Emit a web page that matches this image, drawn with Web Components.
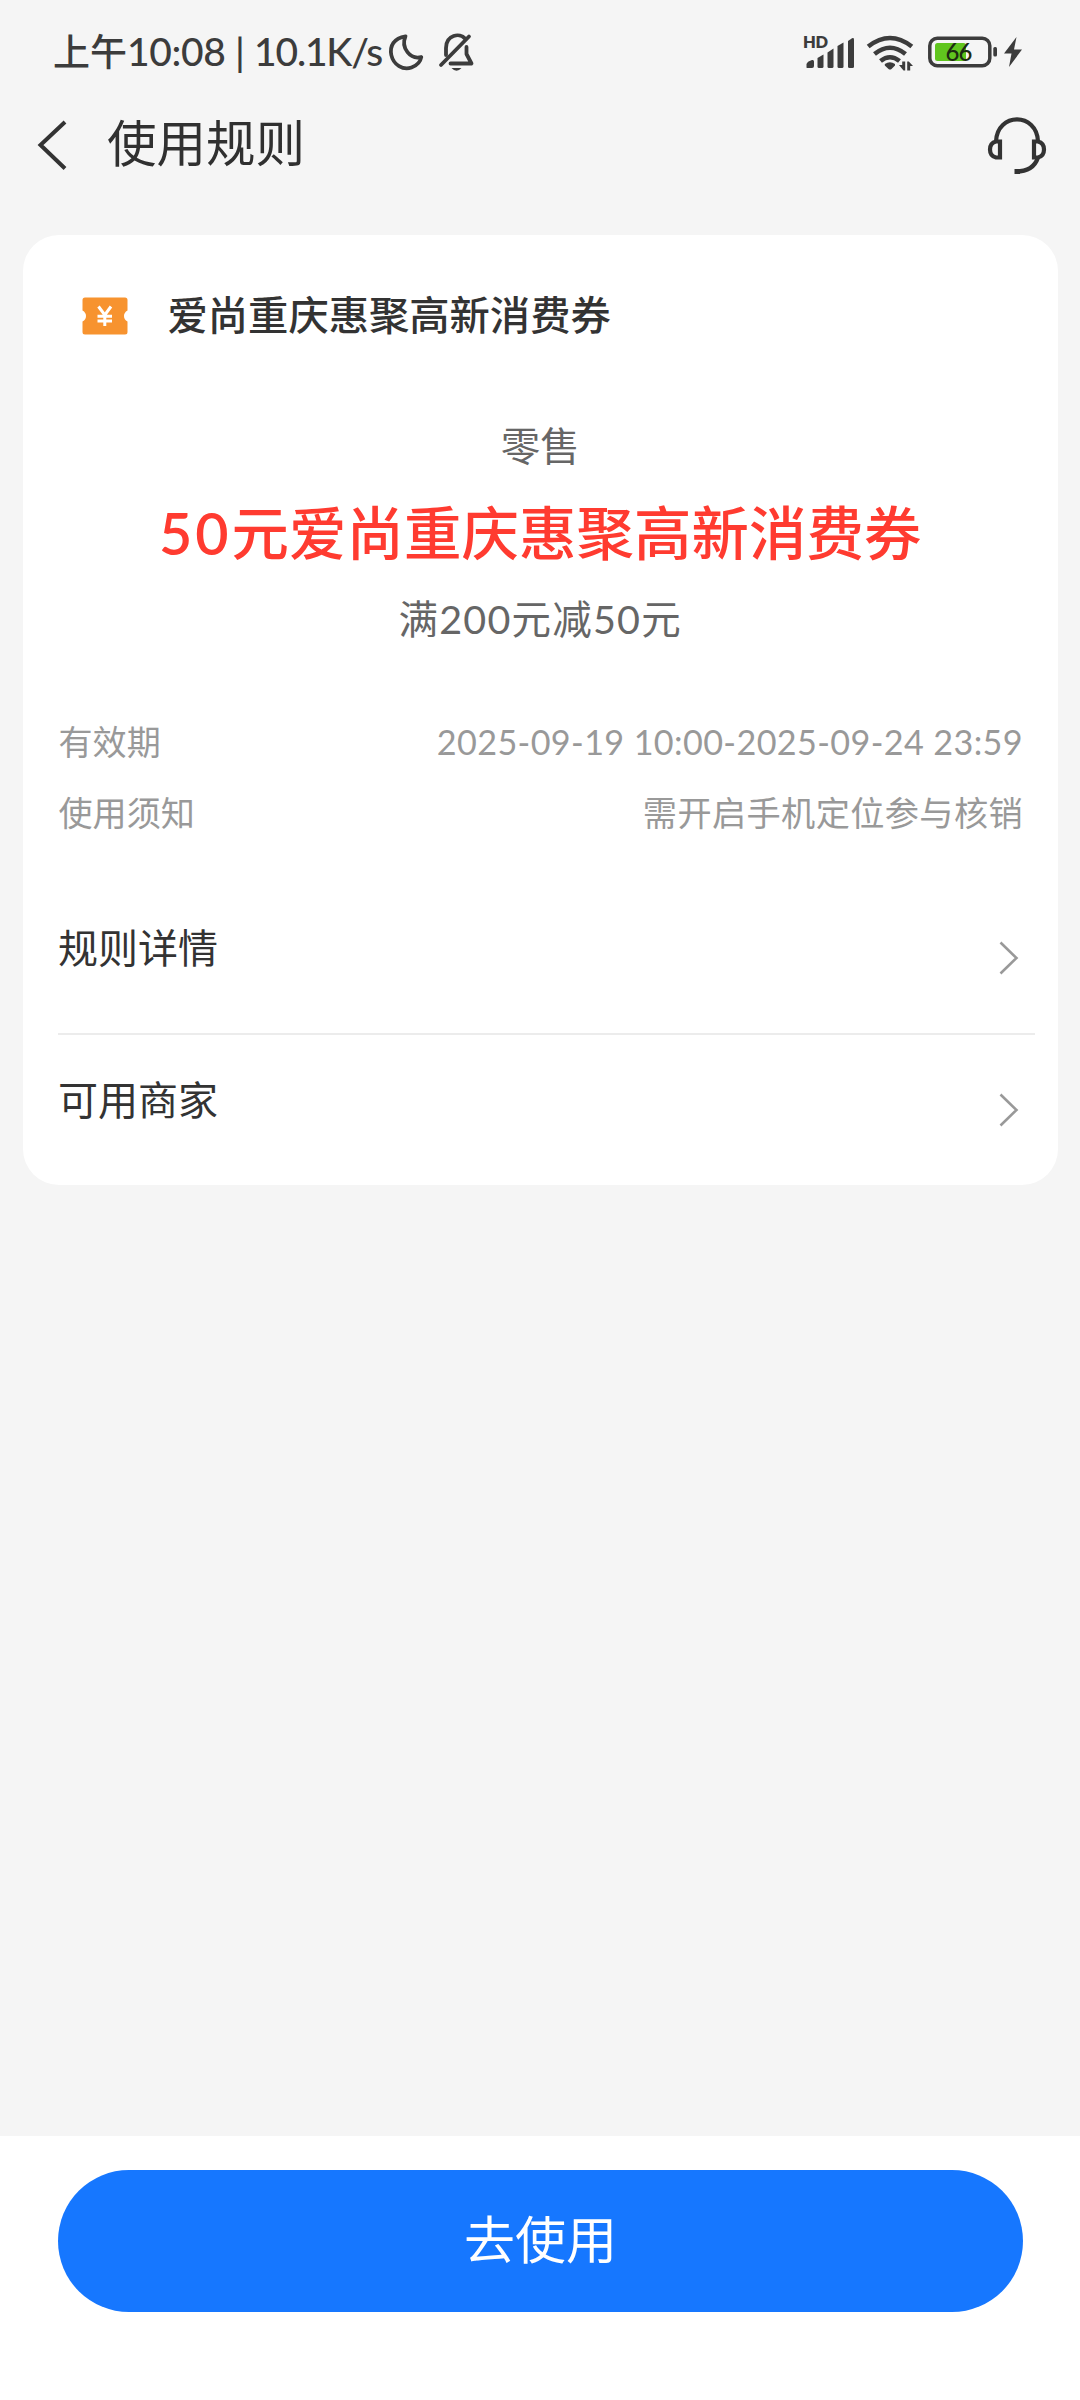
<!DOCTYPE html>
<html lang="zh-CN">
<head>
<meta charset="utf-8">
<title>使用规则</title>
<style>
  body { margin: 0; background: #f5f5f5; font-family: Lato, "Noto Sans CJK SC", sans-serif; color: #333; }
</style>
</head>
<body>
<coupon-page></coupon-page>
<script>
const define = (name, html) => {
  const tpl = document.createElement('template');
  tpl.innerHTML = html;
  customElements.define(name, class extends HTMLElement {
    constructor() {
      super();
      this.attachShadow({ mode: 'open' }).appendChild(tpl.content.cloneNode(true));
    }
  });
};

define('status-bar', `
<style>
  :host { display: flex; height: 100px; padding: 0 40px 0 53px; box-sizing: border-box; color: #3c3c3c; }
  .time { font-size: 39px; font-weight: 500; line-height: 102px; white-space: pre; width: 334px; }
  .cn { font-size: 37px; }
  .clock { letter-spacing: -0.35px; }
  .rate { letter-spacing: -1.200px; }
  svg { display: block; }
  .right { margin-left: auto; }
</style>
<div class="time"><span class="cn">上午</span><span class="clock">10:08 | </span><span class="rate">10.1K/s</span></div>
<svg width="93" height="100" viewBox="387 0 93 100" fill="none" stroke="#3c3c3c" stroke-width="3.8" stroke-linejoin="round" stroke-linecap="round">
  <path d="M405.500 36.300C394 38 389.500 46 391.300 55C393.500 65 403 70.500 411.500 67.500C417 65.500 420.500 61.500 421.300 57C410.500 60 400.500 48 405.500 36.300Z"/>
  <path d="M446 55V48C446 34.500 460 32.500 465 38.500"/>
  <path d="M441 65L469 36.500"/>
  <path d="M466.500 47V54L471.500 63.500H450.500"/>
  <path d="M451.500 68H461.500Q456.500 73.500 451.500 68Z" fill="#3c3c3c" stroke="none"/>
</svg>
<svg class="right" width="240" height="100" viewBox="800 0 240 100" fill="#3c3c3c">
  <text x="803" y="48" font-family="Lato" font-weight="800" font-size="16.500" textLength="25">HD</text>
  <path d="M806.500 67.500V64Q807 62.500 808.500 61.500L812 60Q814 59.500 814 61.500V66Q814 68 812 68H808Q806.500 68 806.500 67.500Z"/>
  <path d="M817.500 58L823.500 54.500V66.500Q823.500 68 822 68H819Q817.500 68 817.500 66.500Z"/>
  <path d="M827.500 52.500L833.500 48.500V66.500Q833.500 68 832 68H829Q827.500 68 827.500 66.500Z"/>
  <path d="M837.500 46L843.500 42.500V66.500Q843.500 68 842 68H839Q837.500 68 837.500 66.500Z"/>
  <path d="M848 41L852 38.200Q854 37.500 854 39.500V66.500Q854 68 852.500 68H849.500Q848 68 848 66.500Z"/>
  <g fill="none" stroke="#3c3c3c" stroke-width="4.600">
    <path d="M868.200 46.500Q890 29.500 911.800 46.500"/>
    <path d="M874.500 54Q890 41.500 905.500 54"/>
    <path d="M880.500 61Q890 53.500 899.500 61"/>
  </g>
  <path d="M884.800 64Q890 60.500 895 64V65.500L891.500 69Q890 70 888.500 69L884.800 65.500Z"/>
  <path d="M902.200 61.500H905.200V70.500H903.500L899 65H902.200ZM907.200 70.500V61.500H908.800L913 66H910.200V70.500Z"/>
  <rect x="929.800" y="38.300" width="60" height="27.500" rx="7.500" fill="none" stroke="#3c3c3c" stroke-width="3.500"/>
  <rect x="993.300" y="47" width="3.700" height="9.500" rx="1.500"/>
  <rect x="935" y="43" width="31" height="18" rx="2.500" fill="#60c51e"/>
  <text x="945.500" y="60.800" font-family="Lato" font-weight="500" font-size="24" fill="#1d2b12" textLength="27">66</text>
  <path d="M1016.500 37L1004 53.500H1011.500L1009 67L1022 49.500H1014Z"/>
</svg>`);

define('nav-bar', `
<style>
  :host { display: flex; align-items: center; height: 90px; padding: 0 30px 0 36px; color: #303030; }
  h1 { margin: 0 auto 0 36px; font-size: 49.500px; font-weight: 400; line-height: 86px; padding-bottom: 4px; }
  svg { display: block; }
</style>
<svg width="35" height="90" viewBox="36 100 35 90" fill="none" stroke="#333" stroke-width="4"><path d="M65 122L40.500 145L65 168.500"/></svg>
<h1><slot></slot></h1>
<svg width="64" height="90" viewBox="986 99.500 64 90" fill="none" stroke="#333" stroke-width="4.200">
  <path d="M996 141C997 111.500 1037 111.500 1038 141"/>
  <path d="M1000 141H996Q990 142.500 990 149Q990 155.500 996 157H1000Z"/>
  <path d="M1034 141H1038Q1044 142.500 1044 149Q1044 155.500 1038 157H1034Z"/>
  <path d="M1038 157C1035 166 1027 171 1016 171"/>
  <rect x="1015.500" y="169.500" width="3.500" height="3" fill="#333" stroke-width="2"/>
</svg>`);

define('coupon-card', `
<style>
  :host { display: block; margin: 44.500px 22px 0 22.500px; height: 950.500px; border-radius: 36px; background: #fff; overflow: hidden; }
  header { display: flex; align-items: center; height: 80px; margin-top: 41px; padding-left: 59px; gap: 40px;
    font-size: 40.300px; font-weight: 500; line-height: 80px; }
  .brand { display: block; line-height: 78px; padding-bottom: 2px; }
  svg { display: block; }
</style>
<header>
  <svg width="46" height="38" viewBox="0 0 46 38">
    <path d="M3 0.500H43Q45.500 0.500 45.500 3V13.500Q42 15.500 42 19Q42 22.500 45.500 24.500V35Q45.500 37.500 43 37.500H3Q0.500 37.500 0.500 35V24.500Q4 22.500 4 19Q4 15.500 0.500 13.500V3Q0.500 0.500 3 0.500Z" fill="#f7932f"/>
    <path d="M16.500 9.500L22.800 18L29 9.500M22.800 17V29M15.500 19.300H30M15.500 24H30" fill="none" stroke="#fff" stroke-width="3"/>
  </svg>
  <div class="brand"><slot name="brand"></slot></div>
</header>
<slot></slot>`);

define('coupon-summary', `
<style>
  :host { display: flex; flex-direction: column; align-items: center; padding-top: 60.500px; color: #666; white-space: nowrap; }
  .kind { font-size: 39.500px; line-height: 60px; }
  .name { margin-top: 17px; font-size: 57.400px; font-weight: 500; line-height: 80px; letter-spacing: .1px; color: #ff3b30; }
  .cond { margin-top: 16px; font-size: 39.500px; line-height: 60px; letter-spacing: 1.200px; }
</style>
<div class="kind"><slot name="kind"></slot></div>
<div class="name"><slot name="name"></slot></div>
<div class="cond"><slot name="cond"></slot></div>`);

define('info-row', `
<style>
  :host { display: flex; justify-content: space-between; height: 71px; padding: 0 35px 0 36px; font-size: 34.100px; line-height: 71px; color: #999; white-space: nowrap; }
  .value { font-size: 34.200px; letter-spacing: .37px; }
</style>
<span><slot name="label"></slot></span><span class="value"><slot></slot></span>`);

define('link-row', `
<style>
  :host { display: flex; justify-content: space-between; height: 152px; margin: 0 23px 0 35.500px; box-sizing: border-box; font-size: 40px; line-height: 130px; color: #333; }
  :host([divided]) { border-bottom: 2px solid #ececec; }
  svg { display: block; margin: 57px 15px 0 0; }
</style>
<span><slot></slot></span>
<svg width="22" height="36" viewBox="0 0 22 36" fill="none" stroke="#999" stroke-width="2.600"><path d="M2.500 2.500L18.500 18L2.500 33.500"/></svg>`);

define('action-bar', `
<style>
  :host { display: block; margin-top: auto; height: 264px; padding: 34px 57px 0 58px; box-sizing: border-box; background: #fff; }
  button { display: block; width: 100%; height: 142px; border: 0; border-radius: 71px; padding: 0 0 8px; background: #1677ff; color: #fff;
    font: 400 51px Lato, "Noto Sans CJK SC", sans-serif; }
</style>
<button><slot></slot></button>`);

define('coupon-page', `
<style>
  :host { display: flex; flex-direction: column; width: 1080px; height: 2400px; overflow: hidden; background: #f5f5f5; }
  .strong { font-weight: 600; letter-spacing: 3px; }
  .facts { display: block; margin-top: 56.500px; }
  .links { display: block; margin-top: 35.500px; }
</style>
<status-bar></status-bar>
<nav-bar>使用规则</nav-bar>
<coupon-card>
  <span slot="brand">爱尚重庆惠聚高新消费券</span>
  <coupon-summary>
    <span slot="kind">零售</span>
    <span slot="name"><span class="strong">50</span>元爱尚重庆惠聚高新消费券</span>
    <span slot="cond">满200元减50元</span>
  </coupon-summary>
  <div class="facts">
    <info-row><span slot="label">有效期</span>2025-09-19 10:00-2025-09-24 23:59</info-row>
    <info-row><span slot="label">使用须知</span>需开启手机定位参与核销</info-row>
  </div>
  <div class="links">
    <link-row divided>规则详情</link-row>
    <link-row>可用商家</link-row>
  </div>
</coupon-card>
<action-bar>去使用</action-bar>`);
</script>
</body>
</html>
